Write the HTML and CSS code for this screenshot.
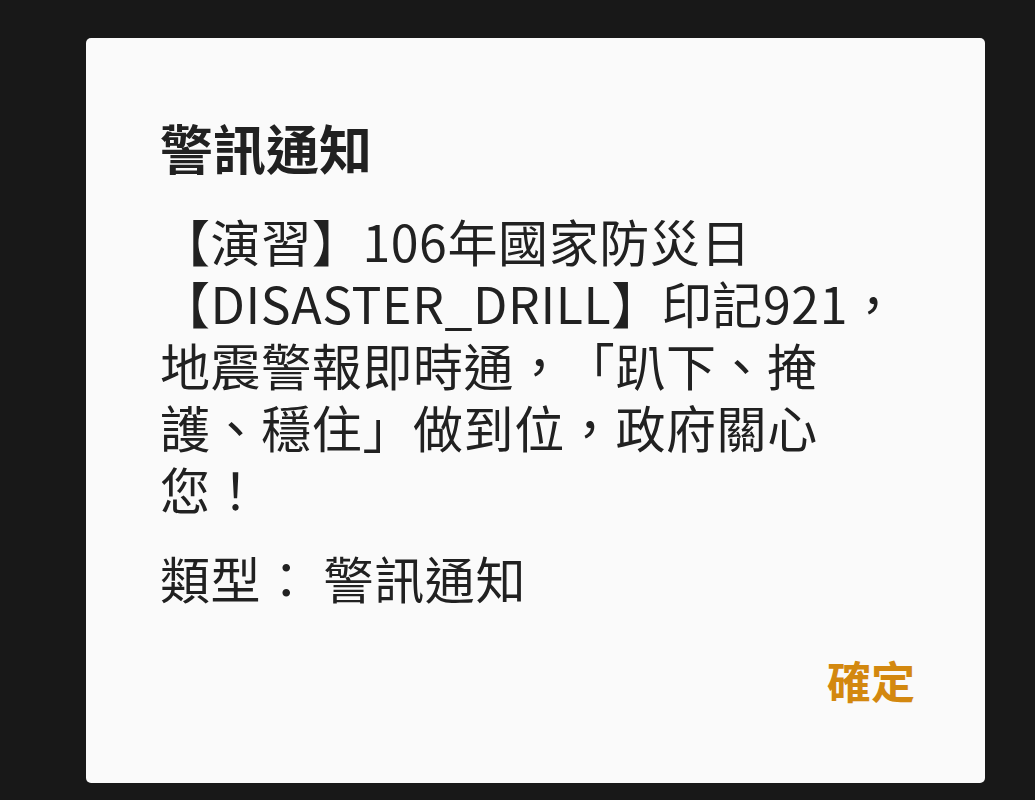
FILE: index.html
```html
<!DOCTYPE html>
<html lang="zh-Hant">
<head>
<meta charset="utf-8">
<title>警訊通知</title>
<link rel="stylesheet" href="styles.css">
</head>
<body>
<div class="dialog">
  <h1 class="title">警訊通知</h1>
  <p class="message">【演習】106年國家防災日<br>【DISASTER_DRILL】印記921，<br>地震警報即時通，「趴下、掩<br>護、穩住」做到位，政府關心<br>您！</p>
  <p class="type">類型： 警訊通知</p>
  <div class="actions"><span class="ok">確定</span></div>
</div>
</body>
</html>
```
FILE: styles.css
```css
html, body {
  margin: 0;
  padding: 0;
  background: #181818;
  height: 100%;
}
body {
  font-family: "Noto Sans CJK TC", "Noto Sans", sans-serif;
  color: #212121;
  padding-top: 38px;
  box-sizing: border-box;
  text-spacing-trim: space-all;
}
.dialog {
  margin-left: 86px;
  width: 899px;
  height: 745px;
  box-sizing: border-box;
  background: #fafafa;
  border-radius: 5px;
  padding: 78px 70px 0 74px;
  display: flex;
  flex-direction: column;
}
.title {
  margin: 0;
  font-size: 53px;
  font-weight: 700;
  line-height: 62px;
  color: #212121;
}
.message {
  margin: 31px 0 0 0;
  font-size: 50px;
  line-height: 62px;
  letter-spacing: 0.6px;
  white-space: nowrap;
  font-weight: 400;
}
.type {
  margin: 27px 0 0 0;
  font-size: 50px;
  line-height: 62px;
  letter-spacing: 0.6px;
  white-space: nowrap;
}
.actions {
  margin-top: 44px;
  display: flex;
  justify-content: flex-end;
}
.ok {
  font-size: 44px;
  line-height: 56px;
  font-weight: 700;
  color: #d3880f;
}
```
